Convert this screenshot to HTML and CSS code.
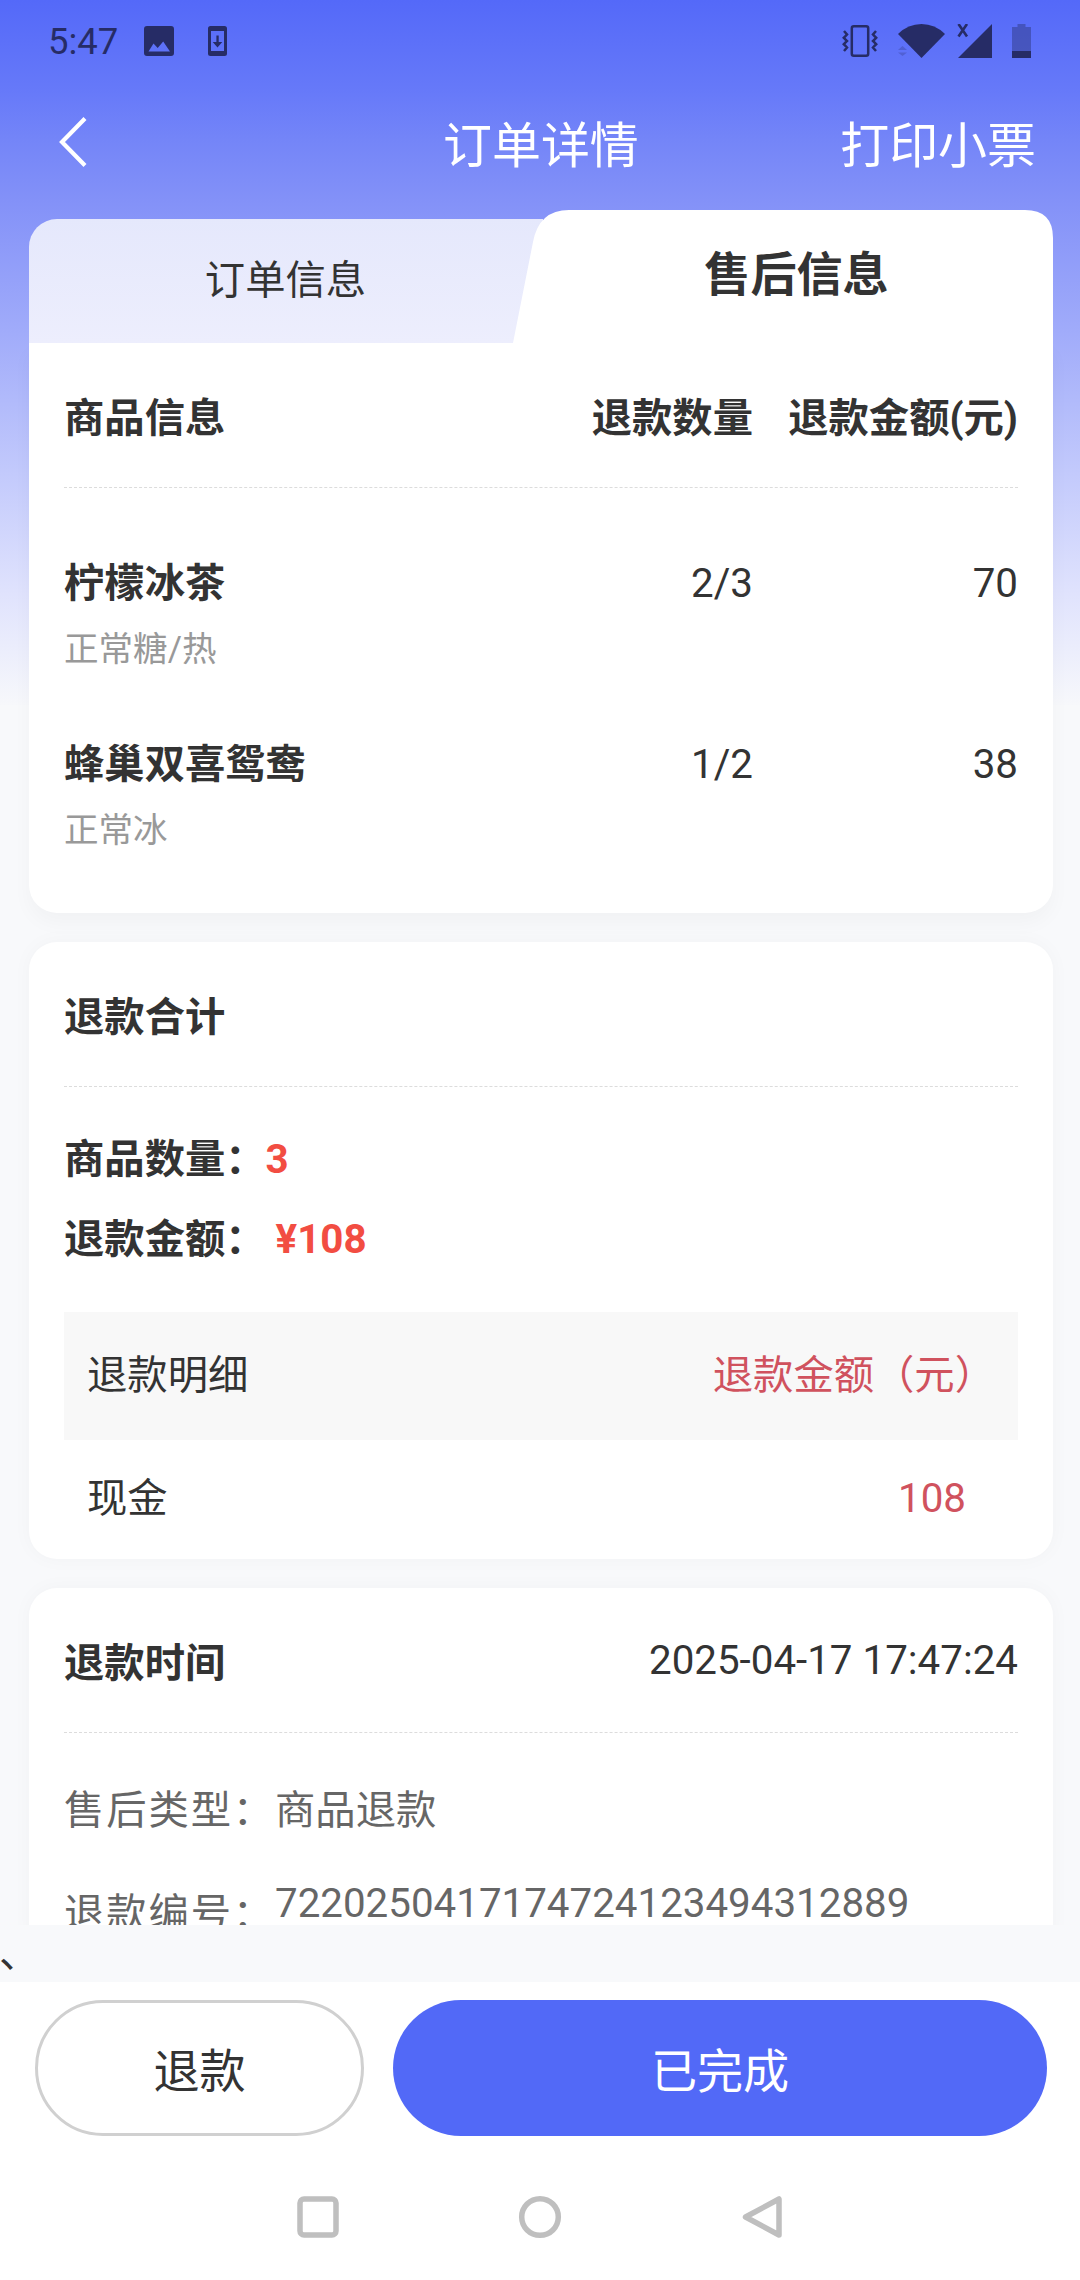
FILE: index.html
```html
<!DOCTYPE html>
<html lang="zh-CN">
<head>
<meta charset="utf-8">
<title>订单详情</title>
<link rel="stylesheet" href="styles.css">
</head>
<body>
<div class="screen">
  <div class="statusbar">
    <div class="status-left">
      <span class="clock">5:47</span>
      <svg class="ic-photo" width="30" height="30" viewBox="0 0 30 30"><path fill="currentColor" fill-rule="evenodd" d="M3 0h24a3 3 0 0 1 3 3v24a3 3 0 0 1-3 3H3a3 3 0 0 1-3-3V3a3 3 0 0 1 3-3zM4.500 25.500h21.500L19.200 15.500 13.700 22 9.500 17.500z"/></svg>
      <svg class="ic-update" width="19" height="30" viewBox="0 0 19 30"><path fill="currentColor" fill-rule="evenodd" d="M2.500 0h14A2.500 2.500 0 0 1 19 2.500v25a2.500 2.500 0 0 1-2.500 2.500h-14A2.500 2.500 0 0 1 0 27.500v-25A2.500 2.500 0 0 1 2.500 0zM3 5v20h13V5zM8.400 9.500h2.300v6.500h3.600L9.500 21.500 4.700 16h3.700z"/></svg>
    </div>
    <div class="status-right">
      <svg class="ic-vibrate" width="36" height="32" viewBox="0 0 36 32" fill="none" stroke="currentColor" stroke-width="2.500"><rect x="9.800" y="1.300" width="16.400" height="29.400" rx="2"/><path d="M2 6l3 3.500-3.200 3.300L5 16l-3.200 3.200L5 22.500l-3 3.500M34 6l-3 3.500 3.200 3.300L31 16l3.200 3.200L31 22.500l3 3.500"/></svg>
      <svg class="ic-wifi" width="47" height="34" viewBox="0 0 47 34"><path fill="currentColor" d="M0 10Q10 0 23.500 0T47 10L23.500 34z"/><path fill="currentColor" opacity=".25" d="M0 26l4.500-4 4.500 4zM0 28.500h9l-4.500 3.500z"/></svg>
      <svg class="ic-signal" width="36" height="34" viewBox="0 0 36 34"><path fill="currentColor" d="M35 0v34H1z"/><path fill="none" stroke="currentColor" stroke-width="2.600" d="M1.500 0l8.500 12.500M10 0L1.500 12.500"/></svg>
      <svg class="ic-battery" width="19" height="34" viewBox="0 0 19 34"><path fill="currentColor" opacity=".4" d="M5.500 0h8v3H19v24H0V3h5.500z"/><path fill="currentColor" d="M0 27h19v7H0z"/></svg>
    </div>
  </div>

  <header class="navbar">
    <svg class="back" width="28" height="50" viewBox="0 0 28 50" fill="none" stroke="#fff" stroke-width="4.200"><path d="M26 1.500L3 25l23 23.500"/></svg>
    <h1 class="title">订单详情</h1>
    <span class="print">打印小票</span>
  </header>

  <main class="scroll">
    <div class="tabs">
      <div class="tab tab-idle">订单信息</div>
      <div class="tab tab-active">
        <svg class="tab-shape" width="540" height="133" viewBox="0 0 540 133"><path fill="#fff" d="M0 133L20 32Q26 0 56 0H512Q540 0 540 28V133z"/></svg>
        <span class="tab-label">售后信息</span>
      </div>
    </div>

    <section class="card card-first">
      <div class="card-head">
        <span class="col-name">商品信息</span>
        <span class="col-qty">退款数量</span>
        <span class="col-sum">退款金额(元)</span>
      </div>
      <div class="goods">
        <div class="item">
          <div class="line"><b class="col-name">柠檬冰茶</b><span class="col-qty">2/3</span><span class="col-sum">70</span></div>
          <div class="spec">正常糖/热</div>
        </div>
        <div class="item">
          <div class="line"><b class="col-name">蜂巢双喜鸳鸯</b><span class="col-qty">1/2</span><span class="col-sum">38</span></div>
          <div class="spec">正常冰</div>
        </div>
      </div>
    </section>

    <section class="card">
      <div class="card-head">退款合计</div>
      <div class="totals">
        <div class="total">商品数量：<span class="red">3</span></div>
        <div class="total">退款金额： <span class="red">¥108</span></div>
      </div>
      <div class="pay pay-head"><span>退款明细</span><span class="amount">退款金额（元）</span></div>
      <div class="pay"><span>现金</span><span class="amount amount-value">108</span></div>
    </section>

    <section class="card">
      <div class="card-head"><span>退款时间</span><span class="date">2025-04-17 17:47:24</span></div>
      <div class="facts">
        <div class="fact"><span class="fact-label">售后类型：</span><span>商品退款</span></div>
        <div class="fact"><span class="fact-label">退款编号：</span><span class="fact-number">7220250417174724123494312889</span></div>
      </div>
    </section>
  </main>

  <div class="stray">、</div>

  <footer class="actions">
    <div class="btn btn-outline">退款</div>
    <div class="btn btn-primary">已完成</div>
  </footer>

  <nav class="sysnav">
    <svg width="44" height="44" viewBox="0 0 44 44"><rect x="4" y="4" width="36" height="36" rx="4"/></svg>
    <svg width="44" height="44" viewBox="0 0 44 44"><circle cx="22" cy="22" r="18.300"/></svg>
    <svg width="44" height="44" viewBox="0 0 44 44"><path d="M39 4v36L5.500 22z"/></svg>
  </nav>
</div>
</body>
</html>
```
FILE: styles.css
```css
* { box-sizing: border-box; }

body {
  margin: 0;
  font-family: Roboto, "Noto Sans CJK SC", sans-serif;
  font-size: 40.32px;
  line-height: 1.4;
  color: #333;
}

.screen {
  width: 1080px;
  height: 2280px;
  display: flex;
  flex-direction: column;
  overflow: hidden;
  background:
    linear-gradient(#5469f9 0, #6679f9 90px, #7485f8 140px, #8391f8 200px, #a0abfa 330px, #c3cafc 475px, #dfe2fd 590px, #f7f8fb 705px) 0 0 / 100% 705px no-repeat,
    #f8f9fb;
}

.statusbar {
  flex: none;
  height: 82px;
  padding: 0 49px 0 48px;
  display: flex;
  justify-content: space-between;
  align-items: center;
  color: #262c66;
}
.status-left, .status-right { display: flex; align-items: center; }
.clock { font-size: 36.5px; line-height: 80px; width: 96px; padding-top: 1px; }
.ic-update { margin-left: 34px; }
.ic-wifi { margin-left: 20px; }
.ic-signal { margin-left: 12px; }
.ic-battery { margin-left: 19px; }

.navbar {
  flex: none;
  height: 128px;
  padding: 1px 44px 0 59px;
  display: grid;
  grid-template-columns: 380px 1fr 220px;
  align-items: center;
  color: #fff;
  font-size: 48.96px;
  line-height: 128px;
}
.title { margin: 0 0 0 4px; font: inherit; }
.print { text-align: right; }
.back { margin-top: -10px; }

.scroll {
  flex: none;
  height: 1715px;
  overflow: hidden;
  padding: 0 27px 0 29px;
}

.tabs {
  height: 133px;
  display: flex;
  align-items: flex-end;
}
.tab { display: flex; justify-content: center; align-items: center; }
.tab-idle {
  flex: 1;
  height: 124px;
  margin-right: -30px;
  padding-right: 1px;
  border-radius: 28px 0 0 0;
  background: linear-gradient(#e5e8fc, #edeefd);
}
.tab-active {
  position: relative;
  width: 540px;
  height: 133px;
  padding: 0 0 2px 27px;
  font-size: 46.08px;
  font-weight: 700;
}
.tab-shape { position: absolute; left: 0; top: 0; }
.tab-label { position: relative; }

.card {
  margin-bottom: 29px;
  padding: 0 35px;
  background: #fff;
  border-radius: 28px;
  box-shadow: 0 0 20px rgba(0, 0, 0, .03);
}
.card-first { border-radius: 0 0 28px 28px; box-shadow: 0 10px 20px rgba(0, 0, 0, .03); }
.card-head {
  height: 145px;
  padding-top: 8px;
  display: flex;
  justify-content: space-between;
  align-items: center;
  border-bottom: 1px dashed #dcdcdc;
  font-weight: 700;
}
.col-name { flex: 1; }
.col-qty { width: 200px; text-align: right; }
.col-sum { width: 265px; text-align: right; white-space: nowrap; }

.goods { padding: 68px 0 55px; display: flex; flex-direction: column; gap: 60px; }
.item { display: flex; flex-direction: column; gap: 9px; line-height: 56px; }
.line { display: flex; }
.spec { font-size: 34.56px; color: #999; }

.totals { padding: 33px 0 32px; font-weight: 700; line-height: 80px; }
.red { color: #f24d42; }
.pay {
  height: 119px;
  padding: 0 23px;
  display: flex;
  justify-content: space-between;
  align-items: center;
}
.pay-head { height: 128px; background: #f8f8f8; }
.amount { color: #d0525e; }
.amount-value { margin-right: 29px; }

.date { font-weight: 400; margin-top: -6px; }
.facts { padding-top: 38px; display: flex; flex-direction: column; gap: 23px; color: #666; }
.fact { display: flex; align-items: flex-start; line-height: 80px; }
.fact-label { width: 211px; letter-spacing: 1.9px; white-space: nowrap; }
.fact-number { line-height: 60px; }

.stray { flex: none; height: 57px; line-height: 57px; text-indent: -1px; }

.actions {
  flex: none;
  height: 172px;
  padding: 18px 33px 18px 35px;
  display: flex;
  gap: 29px;
  background: #fff;
  font-size: 46.08px;
}
.btn {
  border-radius: 68px;
  display: flex;
  justify-content: center;
  align-items: center;
  padding-top: 8px;
}
.btn-outline { width: 329px; border: 3px solid #d0d0d0; }
.btn-primary { flex: 1; background: #5269f7; color: #fff; }

.sysnav {
  flex: 1;
  padding-top: 41px;
  display: flex;
  justify-content: center;
  gap: 178px;
  background: #fff;
  fill: none;
  stroke: #bfbfbf;
  stroke-width: 5.5;
  stroke-linejoin: round;
}
```
